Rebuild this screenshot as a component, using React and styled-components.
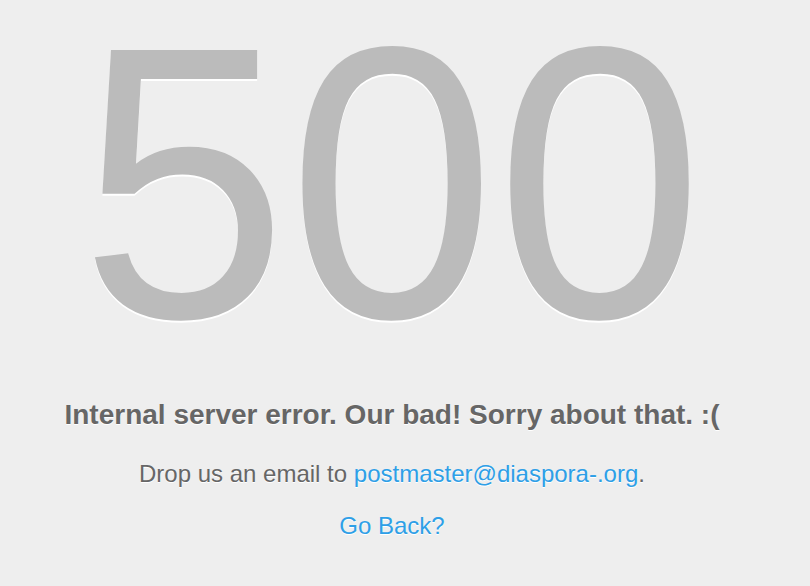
import React from 'react';
import styled, { createGlobalStyle } from 'styled-components';

const GlobalStyle = createGlobalStyle`
  html, body {
    margin: 0;
    background: #eeeeee;
  }
  body {
    padding: 8px;
    font-family: "Liberation Sans", Arial, sans-serif;
  }
`;

const Page = styled.div`
  width: 768px;
  display: flex;
  flex-direction: column;
  align-items: center;
  text-align: center;
  padding-top: 10px;
`;

const Code = styled.h1`
  margin: 0;
  font-size: 388px;
  line-height: 330px;
  font-weight: normal;
  color: #bbbbbb;
  text-shadow: 0 2px 0 #ffffff;
  transform: scaleX(0.963);
`;

const Title = styled.h2`
  margin: 51px 0 0;
  font-size: 28px;
  line-height: 32px;
  font-weight: bold;
  color: #666666;
  text-shadow: 0 1px 0 #ffffff;
`;

const Line = styled.p`
  margin: ${props => props.gap}px 0 0;
  font-size: 24px;
  line-height: 28px;
  color: #666666;
  text-shadow: 0 1px 0 #ffffff;
`;

const Link = styled.a`
  color: #2e9fe7;
  text-decoration: none;
`;

export default function App() {
  return (
    <>
      <GlobalStyle />
      <Page>
        <Code>500</Code>
        <Title>Internal server error. Our bad! Sorry about that. :(</Title>
        <Line gap={29}>
          Drop us an email to <Link href="#">postmaster@diaspora-.org</Link>.
        </Line>
        <Line gap={24}>
          <Link href="#">Go Back?</Link>
        </Line>
      </Page>
    </>
  );
}
